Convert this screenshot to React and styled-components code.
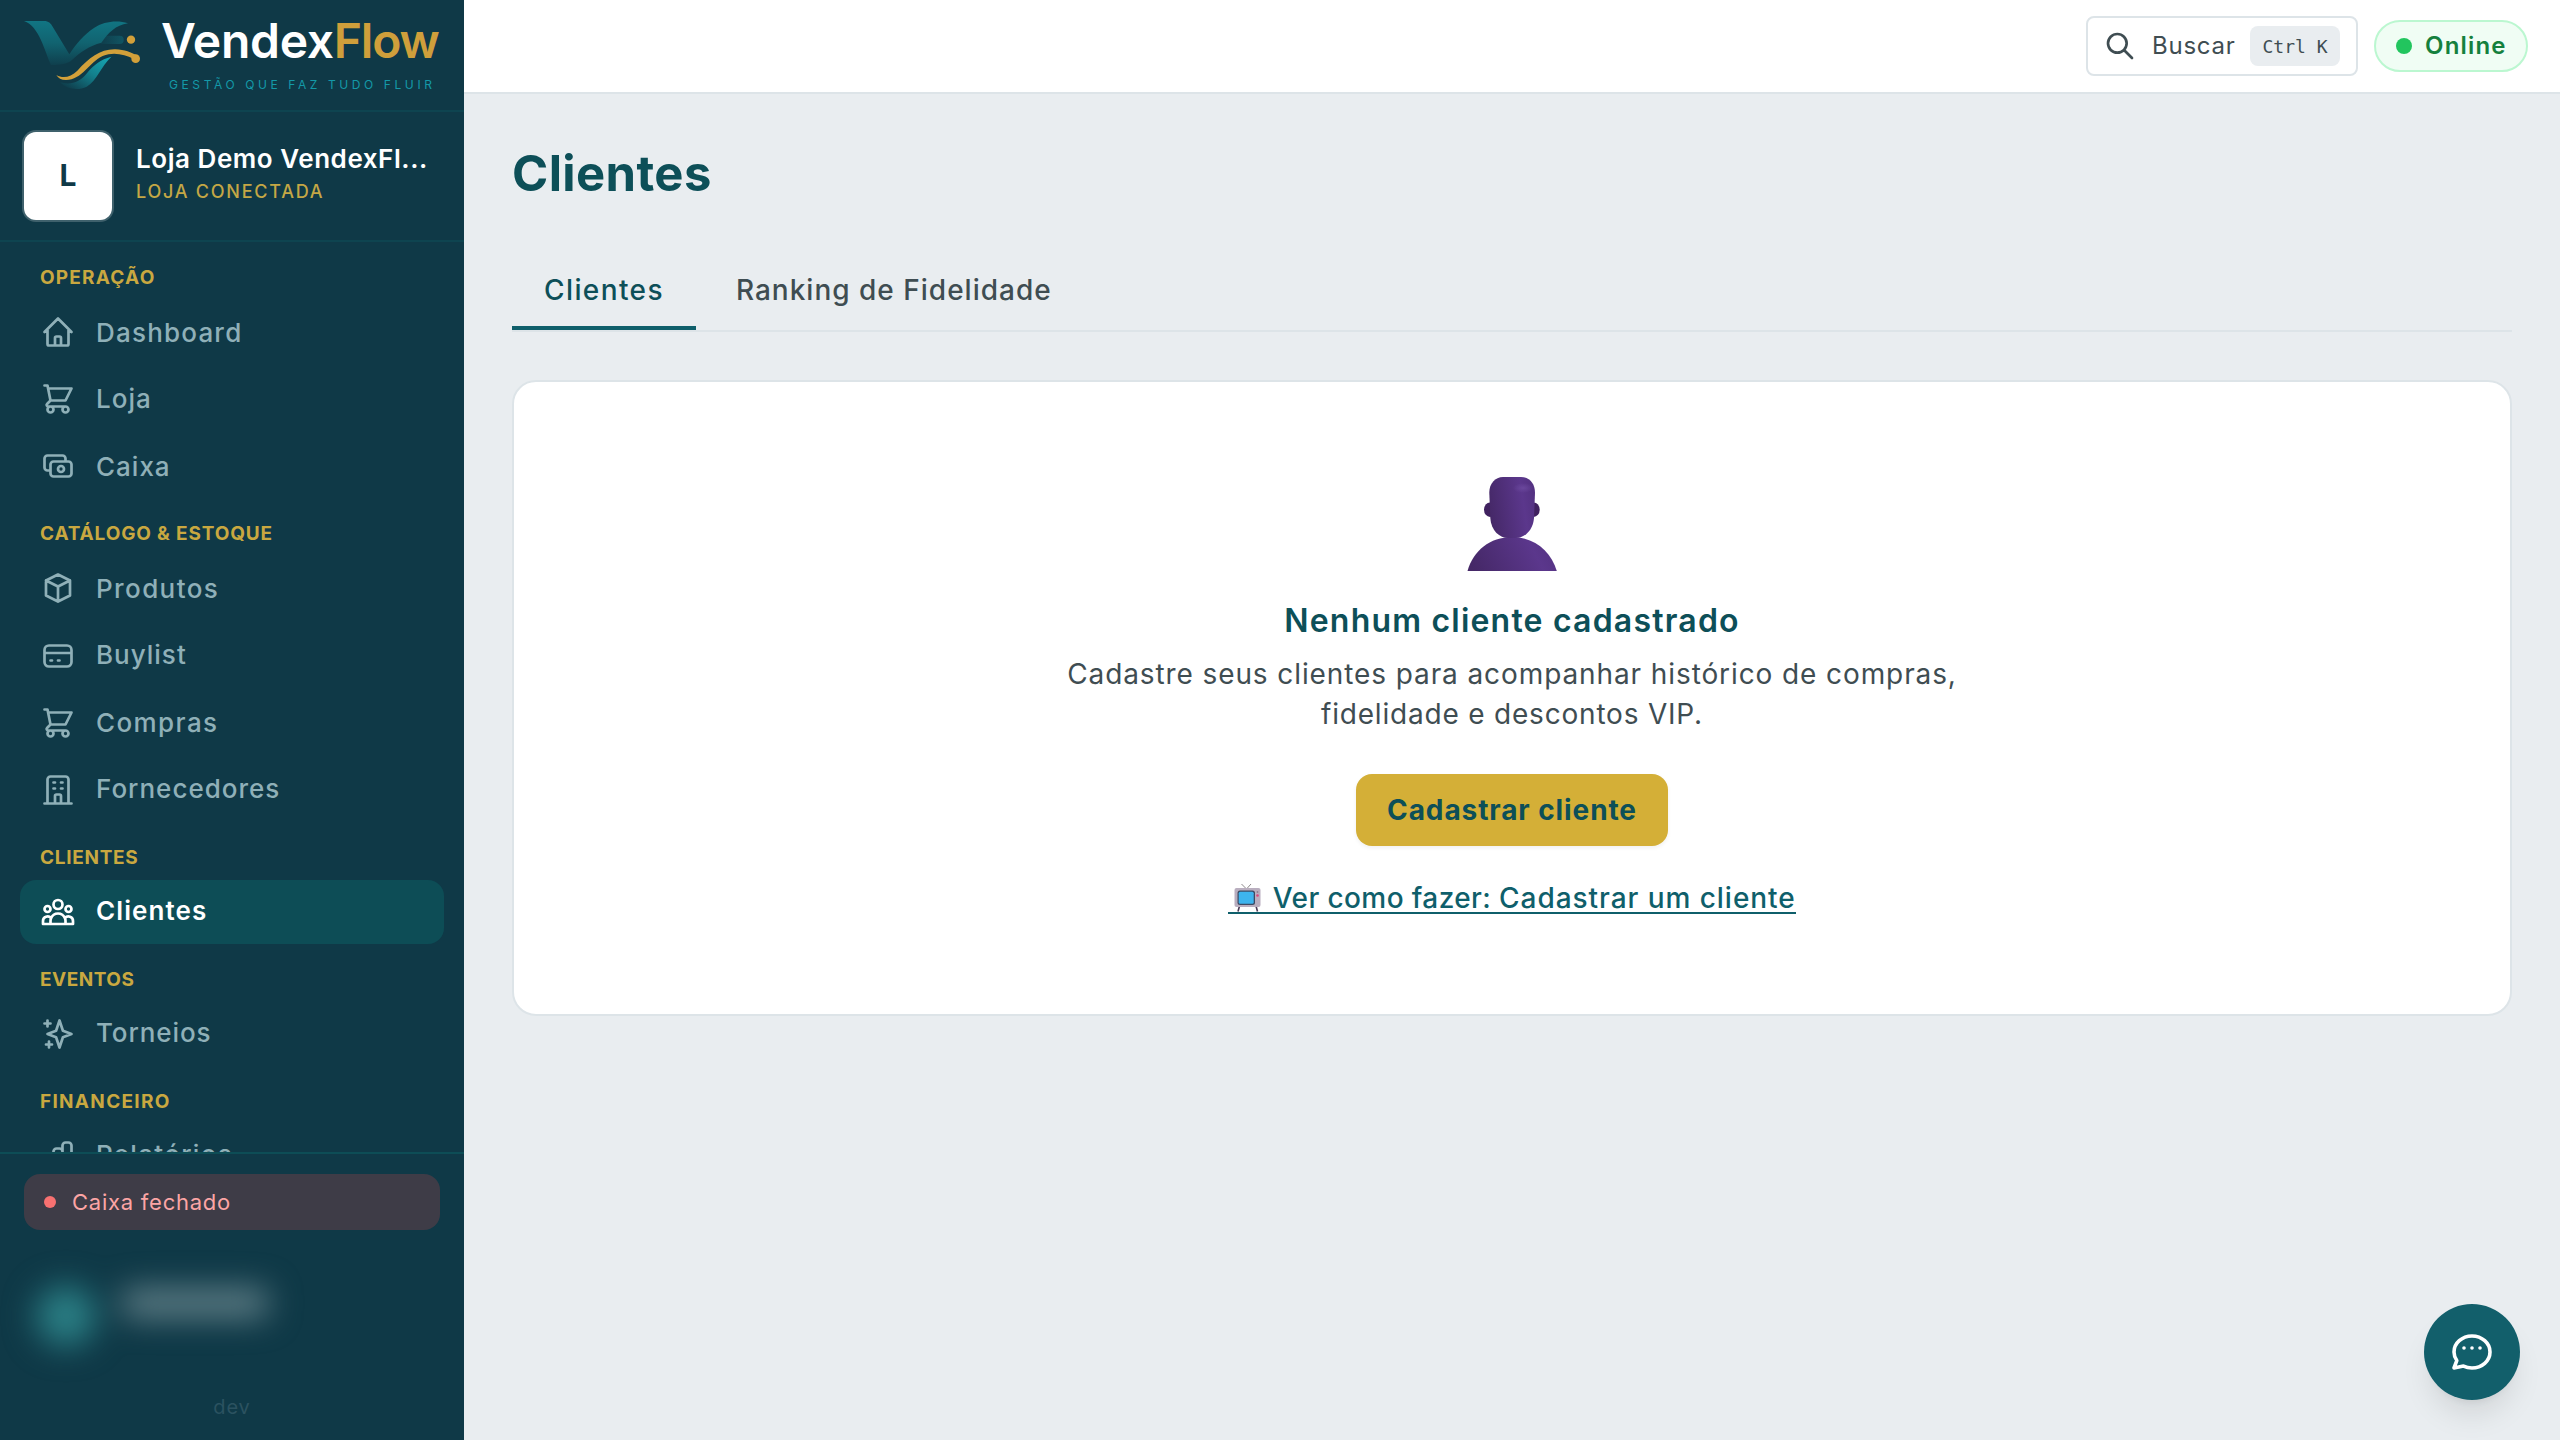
import React from 'react';
import styled, { createGlobalStyle } from 'styled-components';

const GlobalStyle = createGlobalStyle`
  * { box-sizing: border-box; }
  html, body { margin: 0; padding: 0; }
  body {
    font-family: Inter, "Liberation Sans", sans-serif;
    background: #e9edf0;
    overflow: hidden;
  }
`;

const Tracked = styled.span`
  letter-spacing: ${(p) => p.$track || 0}px;
  white-space: pre;
`;

const Shell = styled.div`
  display: flex;
  width: 2560px;
  height: 1440px;
`;

/* ---------- sidebar ---------- */

const Sidebar = styled.aside`
  flex: 0 0 464px;
  display: flex;
  flex-direction: column;
  height: 100%;
  background: #0f3947;
  overflow: hidden;
`;

const Brand = styled.div`
  flex: 0 0 112px;
  display: flex;
  padding: 13px 0 0 22px;
  border-bottom: 2px solid #0e4450;
`;

const BrandMark = styled.svg`
  flex: none;
  width: 120px;
  height: 72px;
  margin-top: 6px;
`;

const BrandText = styled.div`
  display: flex;
  flex-direction: column;
  margin-left: 19px;
`;

const BrandName = styled.div`
  display: flex;
  height: 56px;
  line-height: 56px;
  font-size: 48px;
  font-weight: 600;
  color: #fff;
`;

const BrandAccent = styled(Tracked)`
  color: #cf9f3b;
`;

const Tagline = styled(Tracked)`
  margin: 8px 0 0 8px;
  line-height: 16px;
  font-size: 12px;
  color: #1499a8;
`;

const Store = styled.div`
  flex: 0 0 130px;
  display: flex;
  align-items: center;
  gap: 24px;
  padding: 0 24px;
  border-bottom: 2px solid #0e4450;
`;

const StoreAvatar = styled.div`
  flex: none;
  display: flex;
  align-items: center;
  justify-content: center;
  width: 88px;
  height: 88px;
  padding-bottom: 2px;
  border-radius: 12px;
  background: #fff;
  box-shadow: 0 0 0 2px #3f616c;
  color: #0f3947;
  font-size: 30px;
  font-weight: 700;
`;

const StoreText = styled.div`
  display: flex;
  flex-direction: column;
  padding-bottom: 4px;
`;

const StoreName = styled(Tracked)`
  line-height: 36px;
  font-size: 26px;
  font-weight: 600;
  color: #fff;
`;

const StoreStatus = styled(Tracked)`
  line-height: 30px;
  font-size: 18px;
  font-weight: 500;
  color: #c4a745;
`;

const Nav = styled.nav`
  flex: 1 1 0;
  min-height: 0;
  padding: 0 20px;
  overflow: hidden;
`;

const GroupLabel = styled.div`
  height: 58px;
  padding: 25px 20px 11px;
  line-height: 22px;
  font-size: 19px;
  font-weight: 700;
  color: #c9a840;
`;

const GroupItems = styled.div`
  display: flex;
  flex-direction: column;
  gap: 3.2px;
`;

const NavItem = styled.a`
  display: flex;
  align-items: center;
  gap: 20px;
  height: 64px;
  padding: 0 20px;
  border-radius: 16px;
  font-size: 26px;
  font-weight: ${(p) => (p.$active ? 600 : 500)};
  color: ${(p) => (p.$active ? '#fff' : '#8fb0b8')};
  background: ${(p) => (p.$active ? '#0d4d56' : 'transparent')};
`;

const NavText = styled(Tracked)`
  padding-bottom: ${(p) => (p.$raised ? 2 : 0)}px;
`;

const Glyph = styled.svg`
  flex: none;
  width: ${(p) => p.$size}px;
  height: ${(p) => p.$size}px;
  fill: none;
  stroke: currentColor;
  stroke-width: ${(p) => p.$stroke || 1.8};
  stroke-linecap: round;
  stroke-linejoin: round;
`;

const SidebarFooter = styled.div`
  flex: 0 0 288px;
  display: flex;
  flex-direction: column;
  padding: 20px 24px 0;
  border-top: 2px solid #0d4d56;
`;

const TillStatus = styled.div`
  display: flex;
  align-items: center;
  gap: 16px;
  height: 56px;
  padding: 0 20px;
  border-radius: 16px;
  background: #3e3c47;
  color: #fca5a5;
  font-size: 22px;
`;

const Dot = styled.span`
  flex: none;
  width: ${(p) => p.$size}px;
  height: ${(p) => p.$size}px;
  border-radius: 50%;
  background: ${(p) => p.$color};
`;

const Account = styled.div`
  display: flex;
  align-items: center;
  height: 124px;
  margin-top: 24px;
  padding-left: 12px;
  filter: blur(16px);
`;

const AccountAvatar = styled.div`
  width: 60px;
  height: 60px;
  border-radius: 50%;
  background: #2b8086;
`;

const AccountName = styled.div`
  width: 146px;
  height: 28px;
  margin: 0 0 26px 26px;
  border-radius: 8px;
  background: #64828a;
`;

const Version = styled(Tracked)`
  margin-top: 17px;
  line-height: 24px;
  text-align: center;
  font-size: 20px;
  color: #2b5260;
`;

/* ---------- main column ---------- */

const Main = styled.main`
  flex: 1;
  display: flex;
  flex-direction: column;
`;

const Topbar = styled.header`
  display: flex;
  align-items: center;
  justify-content: flex-end;
  gap: 16px;
  height: 94px;
  padding-right: 32px;
  background: #fff;
  border-bottom: 2px solid #dde4e8;
`;

const SearchButton = styled.button`
  display: flex;
  align-items: center;
  width: 272px;
  height: 60px;
  padding: 0 16px;
  border: 2px solid #dde4e8;
  border-radius: 8px;
  background: #fff;
  color: #3f4d52;
  font: 400 24px Inter, sans-serif;
`;

const SearchLabel = styled(Tracked)`
  margin-left: 16px;
  padding-bottom: 1px;
`;

const Kbd = styled.kbd`
  display: flex;
  align-items: center;
  justify-content: center;
  width: 90px;
  height: 40px;
  margin-left: auto;
  border-radius: 8px;
  background: #e9edf0;
  color: #3f4d52;
  font: 18px "DejaVu Sans Mono", monospace;
`;

const OnlineBadge = styled.div`
  display: flex;
  align-items: center;
  gap: 13px;
  width: 154px;
  height: 52px;
  padding-left: 20px;
  border: 2px solid #bbf7d0;
  border-radius: 26px;
  background: #f0fdf4;
  color: #15803d;
  font-size: 24px;
  font-weight: 600;
`;

const OnlineLabel = styled(Tracked)`
  padding-bottom: 1px;
`;

const Page = styled.section`
  display: flex;
  flex-direction: column;
  padding: 50px 48px 0;
`;

const PageTitle = styled.h1`
  margin: 0;
  line-height: 60px;
  font-size: 49px;
  font-weight: 700;
  color: #0d4f58;
`;

const Tabs = styled.div`
  display: flex;
  gap: 8px;
  margin-top: 46px;
  border-bottom: 2px solid #dde4e8;
`;

const Tab = styled.button`
  padding: 20px 32px 16px;
  border: 0;
  border-bottom: 4px solid ${(p) => (p.$active ? '#0f5f6b' : 'transparent')};
  background: none;
  color: ${(p) => (p.$active ? '#0d4f58' : '#3f4d52')};
  font: 500 28px/40px Inter, sans-serif;
`;

const Card = styled.div`
  display: flex;
  flex-direction: column;
  align-items: center;
  height: 636px;
  margin-top: 48px;
  padding-top: 84px;
  border: 2px solid #dde4e8;
  border-radius: 24px;
  background: #fff;
`;

const PersonArt = styled.svg`
  width: 112px;
  height: 112px;
`;

const EmptyTitle = styled.h3`
  margin: 21px 0 11px;
  line-height: 44px;
  font-size: 32px;
  font-weight: 600;
  color: #0d4f58;
`;

const EmptyText = styled.p`
  display: flex;
  flex-direction: column;
  align-items: center;
  margin: 0;
  line-height: 40px;
  font-size: 28px;
  color: #3f4d52;
`;

const PrimaryButton = styled.button`
  width: 312px;
  height: 72px;
  margin-top: 40px;
  padding: 0;
  border: 0;
  border-radius: 16px;
  background: #d4af37;
  color: #0d4f58;
  font: 700 28px Inter, sans-serif;
  box-shadow: 0 2px 4px rgba(0, 0, 0, 0.06);
`;

const HelpLink = styled.a`
  display: flex;
  height: 30px;
  margin-top: 38px;
  line-height: 28px;
  border-bottom: 2px solid #0f5f6b;
  font-size: 28px;
  font-weight: 500;
  color: #0f5f6b;
`;

const TvArt = styled.svg`
  width: 44.5px;
  height: 28px;
`;

const ChatFab = styled.button`
  position: fixed;
  right: 40px;
  bottom: 40px;
  display: flex;
  align-items: center;
  justify-content: center;
  width: 96px;
  height: 96px;
  padding: 0;
  border: 0;
  border-radius: 50%;
  background: #125f6b;
  color: #fff;
  box-shadow: 0 20px 30px -6px rgba(0, 0, 0, 0.1), 0 8px 12px -8px rgba(0, 0, 0, 0.1);
`;

/* ---------- data ---------- */

const paths = {
  home: 'M3 12l2-2m0 0l7-7 7 7M5 10v10a1 1 0 001 1h3m10-11l2 2m-2-2v10a1 1 0 01-1 1h-3m-6 0a1 1 0 001-1v-4a1 1 0 011-1h2a1 1 0 011 1v4a1 1 0 001 1m-6 0h6',
  cart: 'M3 3h2l.4 2M7 13h10l4-8H5.4M7 13L5.4 5M7 13l-2.293 2.293c-.63.63-.184 1.707.707 1.707H17m0 0a2 2 0 100 4 2 2 0 000-4zm-8 2a2 2 0 11-4 0 2 2 0 014 0z',
  cash: 'M17 9V7a2 2 0 00-2-2H5a2 2 0 00-2 2v6a2 2 0 002 2h2m2 4h10a2 2 0 002-2v-6a2 2 0 00-2-2H9a2 2 0 00-2 2v6a2 2 0 002 2zm7-5a2 2 0 11-4 0 2 2 0 014 0z',
  cube: 'M20 7l-8-4-8 4m16 0l-8 4m8-4v10l-8 4m0-10L4 7m8 4v10M4 7v10l8 4',
  card: 'M3 10h18M7 15h1m4 0h1m-7 4h12a3 3 0 003-3V8a3 3 0 00-3-3H6a3 3 0 00-3 3v8a3 3 0 003 3z',
  building: 'M19 21V5a2 2 0 00-2-2H7a2 2 0 00-2 2v16m14 0h2m-2 0h-5m-9 0H3m2 0h5M9 7h1m-1 4h1m4-4h1m-1 4h1m-5 10v-5a1 1 0 011-1h2a1 1 0 011 1v5m-4 0h4',
  users: 'M17 20h5v-2a3 3 0 00-5.356-1.857M17 20H7m10 0v-2c0-.656-.126-1.283-.356-1.857M7 20H2v-2a3 3 0 015.356-1.857M7 20v-2c0-.656.126-1.283.356-1.857m0 0a5.002 5.002 0 019.288 0M15 7a3 3 0 11-6 0 3 3 0 016 0zm6 3a2 2 0 11-4 0 2 2 0 014 0zM7 10a2 2 0 11-4 0 2 2 0 014 0z',
  sparkles: 'M5 3v4M3 5h4M6 17v4m-2-2h4m5-16l2.286 6.857L21 12l-5.714 2.143L13 21l-2.286-6.857L5 12l5.714-2.143L13 3z',
  chart: 'M9 19v-6a2 2 0 00-2-2H5a2 2 0 00-2 2v6a2 2 0 002 2h2a2 2 0 002-2zm0 0V9a2 2 0 012-2h2a2 2 0 012 2v10m-6 0a2 2 0 002 2h2a2 2 0 002-2m0 0V5a2 2 0 012-2h2a2 2 0 012 2v14a2 2 0 01-2 2h-2a2 2 0 01-2-2z',
  search: 'M21 21l-6-6m2-5a7 7 0 11-14 0 7 7 0 0114 0z',
  chat: 'M8 10h.01M12 10h.01M16 10h.01M21 12c0 4.418-4.03 8-9 8a9.863 9.863 0 01-4.255-.949L3 20l1.395-3.72C3.512 15.042 3 13.574 3 12c0-4.418 4.03-8 9-8s9 3.582 9 8z',
};

const groups = [
  { label: 'OPERAÇÃO', track: 1.2, items: [
    { icon: 'home', text: 'Dashboard', track: 1.2 },
    { icon: 'cart', text: 'Loja', track: 1, raised: true },
    { icon: 'cash', text: 'Caixa', track: 1 },
  ] },
  { label: 'CATÁLOGO & ESTOQUE', track: 0.85, items: [
    { icon: 'cube', text: 'Produtos', track: 1.4 },
    { icon: 'card', text: 'Buylist', track: 1, raised: true },
    { icon: 'cart', text: 'Compras', track: 1.4 },
    { icon: 'building', text: 'Fornecedores', track: 1, raised: true },
  ] },
  { label: 'CLIENTES', track: 0.7, items: [
    { icon: 'users', text: 'Clientes', track: 1.1, active: true, raised: true },
  ] },
  { label: 'EVENTOS', track: 0.5, items: [
    { icon: 'sparkles', text: 'Torneios', track: 0.9, raised: true },
  ] },
  { label: 'FINANCEIRO', track: 1.3, items: [
    { icon: 'chart', text: 'Relatórios', track: 1.3, raised: true },
  ] },
];

function Icon({ name, size = 36, stroke }) {
  return (
    <Glyph viewBox="0 0 24 24" $size={size} $stroke={stroke}>
      <path d={paths[name]} />
    </Glyph>
  );
}

function Logo() {
  return (
    <BrandMark viewBox="66 57 360 216">
      <defs>
        <linearGradient id="wing" x1="0" y1="0" x2="0" y2="1">
          <stop offset="0" stopColor="#117583" />
          <stop offset="0.5" stopColor="#116370" />
          <stop offset="1" stopColor="#0f3f4d" />
        </linearGradient>
        <linearGradient id="tail" x1="1" y1="0" x2="0.1" y2="0.9">
          <stop offset="0" stopColor="#17a9b6" />
          <stop offset="0.5" stopColor="#13808d" />
          <stop offset="1" stopColor="#0f3f4d" />
        </linearGradient>
        <linearGradient id="trail" x1="0" y1="0" x2="1" y2="0">
          <stop offset="0" stopColor="#0f3947" />
          <stop offset="1" stopColor="#105563" />
        </linearGradient>
      </defs>
      <rect x="290" y="107" width="81" height="25" rx="12" fill="url(#trail)" />
      <path fill="url(#wing)" d="M72 63H132C146 63 152 70 158 80L208 163C228 132 252 104 282 84C312 64 352 60 384 70C346 76 326 98 304 128C268 138 240 156 216 180C202 193 180 195 153 195C134 154 118 78 72 63Z" />
      <path fill="url(#tail)" d="M334 170C302 178 280 196 262 218C240 246 214 256 180 247C198 266 232 274 260 260C292 240 302 200 334 170Z" />
      <path fill="#d2a03a" d="M169 225C190 237 212 231 232 212C268 174 300 147 346 148C374 149 394 158 410 166L400 176C374 164 342 154 308 168C268 186 246 240 198 240C184 240 174 234 169 225Z" />
      <circle cx="407" cy="176" r="13" fill="#d2a03a" />
      <circle cx="393" cy="119" r="12.5" fill="#d2a03a" />
    </BrandMark>
  );
}

function Person() {
  return (
    <PersonArt viewBox="0 0 112 112">
      <defs>
        <linearGradient id="skin" x1="0" y1="0.6" x2="1" y2="0.4">
          <stop offset="0" stopColor="#452867" />
          <stop offset="0.75" stopColor="#5b378c" />
          <stop offset="1" stopColor="#543282" />
        </linearGradient>
        <radialGradient id="shine">
          <stop offset="0" stopColor="#6a479c" />
          <stop offset="1" stopColor="#6a479c" stopOpacity="0" />
        </radialGradient>
      </defs>
      <ellipse cx="34" cy="43.7" rx="6" ry="7.3" fill="#40215f" />
      <ellipse cx="77.7" cy="43.7" rx="6" ry="7.3" fill="#40215f" />
      <path fill="url(#skin)" d="M11.5 105C17 85 34 71 56 71s39 14 44.8 34Z" />
      <path fill="url(#skin)" d="M47 11H65C74 11 79 18 79 27L78 52C77 65 68 72 60 72H52C44 72 35 65 34.3 52L33.3 27C33 18 39 11 47 11Z" />
      <ellipse cx="67" cy="22" rx="10" ry="5" fill="url(#shine)" />
    </PersonArt>
  );
}

function Tv() {
  return (
    <TvArt viewBox="6.5 10 44.5 28">
      <path d="M20 10l5 5 4.5-5" fill="none" stroke="#8f8a8d" strokeWidth="1" />
      <path d="M18 32l-1.5 5.5M34.5 32l1.5 5.5" stroke="#4b3a55" strokeWidth="1.6" />
      <rect x="13" y="14" width="26" height="19" rx="2" fill="#b9aebf" />
      <rect x="16" y="16.5" width="17.5" height="14.5" rx="2.5" fill="#3d4a63" />
      <rect x="17.2" y="17.7" width="15" height="12" rx="1.5" fill="#3db4ee" />
      <circle cx="36" cy="18" r="0.9" fill="#8b7f93" />
      <circle cx="36" cy="21.5" r="1.3" fill="#d9487f" />
    </TvArt>
  );
}

export default function App() {
  return (
    <>
      <GlobalStyle />
      <Shell>
        <Sidebar>
          <Brand>
            <Logo />
            <BrandText>
              <BrandName>
                <Tracked $track={-0.3}>Vendex</Tracked>
                <BrandAccent $track={-1.2}>Flow</BrandAccent>
              </BrandName>
              <Tagline $track={3.6}>GESTÃO QUE FAZ TUDO FLUIR</Tagline>
            </BrandText>
          </Brand>
          <Store>
            <StoreAvatar>L</StoreAvatar>
            <StoreText>
              <StoreName $track={0.55}>Loja Demo VendexFl...</StoreName>
              <StoreStatus $track={1.75}>LOJA CONECTADA</StoreStatus>
            </StoreText>
          </Store>
          <Nav>
            {groups.map((g) => (
              <div key={g.label}>
                <GroupLabel><Tracked $track={g.track}>{g.label}</Tracked></GroupLabel>
                <GroupItems>
                  {g.items.map((item) => (
                    <NavItem key={item.text} $active={item.active}>
                      <Icon name={item.icon} />
                      <NavText $track={item.track} $raised={item.raised}>{item.text}</NavText>
                    </NavItem>
                  ))}
                </GroupItems>
              </div>
            ))}
          </Nav>
          <SidebarFooter>
            <TillStatus>
              <Dot $size={12} $color="#f87171" />
              <Tracked $track={0.75}>Caixa fechado</Tracked>
            </TillStatus>
            <Account>
              <AccountAvatar />
              <AccountName />
            </Account>
            <Version $track={0.9}>dev</Version>
          </SidebarFooter>
        </Sidebar>
        <Main>
          <Topbar>
            <SearchButton>
              <Icon name="search" size={32} stroke={2} />
              <SearchLabel $track={0.75}>Buscar</SearchLabel>
              <Kbd>Ctrl K</Kbd>
            </SearchButton>
            <OnlineBadge>
              <Dot $size={16} $color="#22c55e" />
              <OnlineLabel $track={1.2}>Online</OnlineLabel>
            </OnlineBadge>
          </Topbar>
          <Page>
            <PageTitle><Tracked $track={0.4}>Clientes</Tracked></PageTitle>
            <Tabs>
              <Tab $active><Tracked $track={1.4}>Clientes</Tracked></Tab>
              <Tab><Tracked $track={1}>Ranking de Fidelidade</Tracked></Tab>
            </Tabs>
            <Card>
              <Person />
              <EmptyTitle><Tracked $track={1.2}>Nenhum cliente cadastrado</Tracked></EmptyTitle>
              <EmptyText>
                <Tracked $track={0.9}>Cadastre seus clientes para acompanhar histórico de compras,</Tracked>
                <Tracked $track={0.8}>fidelidade e descontos VIP.</Tracked>
              </EmptyText>
              <PrimaryButton><Tracked $track={0.9}>Cadastrar cliente</Tracked></PrimaryButton>
              <HelpLink>
                <Tv />
                <Tracked $track={0.4}>{'Ver como fazer: '}</Tracked>
                <Tracked $track={0.95}>Cadastrar um cliente</Tracked>
              </HelpLink>
            </Card>
          </Page>
        </Main>
      </Shell>
      <ChatFab><Icon name="chat" size={48} /></ChatFab>
    </>
  );
}
